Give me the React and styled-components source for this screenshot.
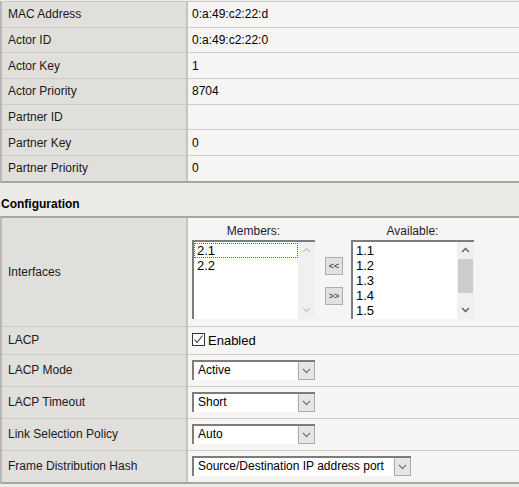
import React from "react";
import styled, { createGlobalStyle } from "styled-components";

const GlobalStyle = createGlobalStyle`
  body {
    margin: 0;
    background: #ecebe8;
    font-family: "Liberation Sans", Arial, sans-serif;
    font-size: 12px;
    color: #111;
  }
`;

const Panel = styled.div`
  margin-top: ${(p) => (p.$top ? "1px" : "0")};
  border-top: ${(p) => (p.$top ? "1px solid #cacaca" : "2px solid #a6a6a6")};
  border-bottom: 2px solid #a6a6a6;
  border-left: 2px solid #b8b8b8;
`;

const Row = styled.div`
  display: grid;
  grid-template-columns: 186px 1fr;
  height: ${(p) => p.$h}px;
  border-bottom: 1px solid #cacaca;
  &:last-child {
    border-bottom: none;
  }
`;

const Label = styled.div`
  background: #e0dfdc;
  border-right: 2px solid #c4c4c4;
  display: flex;
  align-items: center;
  padding-left: 6px;
  color: #1a1a1a;
`;

const Value = styled.div`
  background: #f6f5f3;
  display: flex;
  align-items: ${(p) => (p.$top ? "flex-start" : "center")};
  padding-left: 4px;
  padding-top: ${(p) => (p.$top ? "6px" : "0")};
  color: #000;
`;

const Heading = styled.div`
  height: 33px;
  display: flex;
  align-items: flex-end;
  padding: 0 0 5px 1px;
  box-sizing: border-box;
  font-weight: bold;
  line-height: 14px;
  color: #000;
`;

const Picker = styled.div`
  display: flex;
  align-items: flex-start;
`;

const Group = styled.div`
  display: flex;
  flex-direction: column;
  width: 123px;
`;

const GroupTitle = styled.div`
  text-align: center;
  line-height: 14px;
  margin-bottom: 2px;
  color: #1c1c2e;
`;

const ListBox = styled.div`
  display: flex;
  height: 79px;
  box-sizing: border-box;
  border-top: 2px solid #7c7c7c;
  border-left: 2px solid #7c7c7c;
  background: #fff;
`;

const Items = styled.div`
  flex: 1;
  padding-top: 1px;
  overflow: hidden;
`;

const Item = styled.div`
  height: 15px;
  line-height: 15px;
  font-size: 13px;
  padding-left: 3px;
  color: #000;
  box-sizing: border-box;
  outline: ${(p) => (p.$focus ? "1px dotted #2f6fd0" : "none")};
  outline-offset: -1px;
`;

const ScrollBar = styled.div`
  width: 17px;
  background: #f0f0f0;
  display: flex;
  flex-direction: column;
`;

const Arrow = styled.div`
  height: 17px;
  display: flex;
  align-items: center;
  justify-content: center;
`;

const Track = styled.div`
  flex: 1;
  display: flex;
  flex-direction: column;
`;

const Thumb = styled.div`
  height: 34px;
  margin: 0 1px;
  background: #cdcdcd;
`;

const Movers = styled.div`
  display: flex;
  flex-direction: column;
  gap: 12px;
  margin: 33px 8px 0 10px;
`;

const MoveButton = styled.button`
  width: 18px;
  height: 18px;
  padding: 0;
  background: #e1e1e1;
  border: 1px solid #adadad;
  font-family: "Liberation Sans", Arial, sans-serif;
  font-size: 9px;
  color: #222;
  line-height: 14px;
`;

const CheckWrap = styled.label`
  display: flex;
  align-items: center;
  gap: 3px;
  font-size: 13px;
  color: #000;
`;

const CheckBox = styled.span`
  width: 11px;
  height: 11px;
  border: 1px solid #333;
  background: #fff;
  display: flex;
  align-items: center;
  justify-content: center;
  margin-top: -2px;
`;

const Select = styled.div`
  display: flex;
  width: ${(p) => p.$w}px;
  height: 20px;
  box-sizing: border-box;
  border-top: 2px solid #7c7c7c;
  border-left: 2px solid #7c7c7c;
  background: #fff;
`;

const SelectText = styled.div`
  flex: 1;
  padding-left: 4px;
  line-height: 17px;
  color: #000;
  white-space: nowrap;
  overflow: hidden;
`;

const SelectButton = styled.div`
  width: 17px;
  box-sizing: border-box;
  border: 1px solid #a9a9a9;
  border-top: none;
  background: #e6e6e6;
  display: flex;
  align-items: center;
  justify-content: center;
`;

const Chevron = ({ up, color }) => (
  <svg width="9" height="6" viewBox="0 0 9 6">
    <path
      d={up ? "M1 5 L4.5 1.5 L8 5" : "M1 1 L4.5 4.5 L8 1"}
      fill="none"
      stroke={color}
      strokeWidth="1.3"
    />
  </svg>
);

const List = ({ items, focus, thumb }) => {
  const arrow = thumb ? "#5a5a5a" : "#c8c8c8";
  return (
    <ListBox>
      <Items>
        {items.map((it, i) => (
          <Item key={it} $focus={focus && i === 0}>
            {it}
          </Item>
        ))}
      </Items>
      <ScrollBar>
        <Arrow>
          <Chevron up color={arrow} />
        </Arrow>
        <Track>{thumb && <Thumb />}</Track>
        <Arrow>
          <Chevron color={arrow} />
        </Arrow>
      </ScrollBar>
    </ListBox>
  );
};

const Dropdown = ({ value, width = 123 }) => (
  <Select $w={width}>
    <SelectText>{value}</SelectText>
    <SelectButton>
      <Chevron color="#7a7a7a" />
    </SelectButton>
  </Select>
);

const status = [
  ["MAC Address", "0:a:49:c2:22:d"],
  ["Actor ID", "0:a:49:c2:22:0"],
  ["Actor Key", "1"],
  ["Actor Priority", "8704"],
  ["Partner ID", ""],
  ["Partner Key", "0"],
  ["Partner Priority", "0"],
];

const selects = [
  ["LACP Mode", "Active", 123],
  ["LACP Timeout", "Short", 123],
  ["Link Selection Policy", "Auto", 123],
  ["Frame Distribution Hash", "Source/Destination IP address port", 219],
];

export default function App() {
  return (
    <>
      <GlobalStyle />
      <Panel $top>
        {status.map(([k, v]) => (
          <Row key={k} $h={24.7}>
            <Label>{k}</Label>
            <Value>{v}</Value>
          </Row>
        ))}
      </Panel>
      <Heading>Configuration</Heading>
      <Panel>
        <Row $h={108}>
          <Label>Interfaces</Label>
          <Value $top>
            <Picker>
              <Group>
                <GroupTitle>Members:</GroupTitle>
                <List items={["2.1", "2.2"]} focus />
              </Group>
              <Movers>
                <MoveButton>&lt;&lt;</MoveButton>
                <MoveButton>&gt;&gt;</MoveButton>
              </Movers>
              <Group>
                <GroupTitle>Available:</GroupTitle>
                <List items={["1.1", "1.2", "1.3", "1.4", "1.5"]} thumb />
              </Group>
            </Picker>
          </Value>
        </Row>
        <Row $h={27}>
          <Label>LACP</Label>
          <Value>
            <CheckWrap>
              <CheckBox>
                <svg width="11" height="11" viewBox="0 0 11 11">
                  <path d="M1.5 5.5 L4 8.5 L9.5 1.5" fill="none" stroke="#333" strokeWidth="1.1" />
                </svg>
              </CheckBox>
              Enabled
            </CheckWrap>
          </Value>
        </Row>
        {selects.map(([k, v, w]) => (
          <Row key={k} $h={31}>
            <Label>{k}</Label>
            <Value>
              <Dropdown value={v} width={w} />
            </Value>
          </Row>
        ))}
      </Panel>
    </>
  );
}
